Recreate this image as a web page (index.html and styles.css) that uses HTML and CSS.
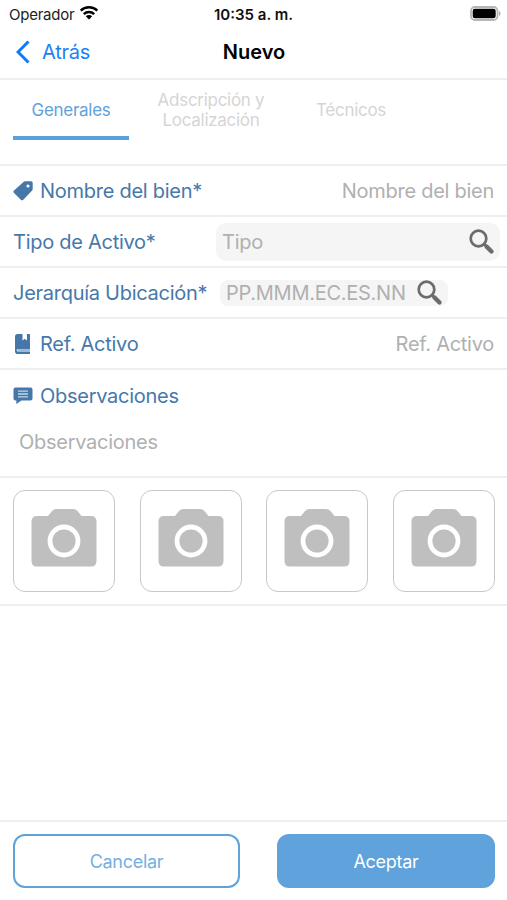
FILE: index.html
```html
<!DOCTYPE html>
<html lang="es">
<head>
    <meta charset="UTF-8">
    <title>Nuevo</title>
    <link rel="stylesheet" href="styles.css">
</head>
<body>

    <svg class="defs" width="0" height="0">
        <symbol id="search" viewBox="0 0 26 26">
            <circle cx="9.5" cy="9.5" r="7.800" fill="none" stroke="#6c6c6c" stroke-width="2.7"/>
            <path d="M15 15l2.5 2.5" stroke="#6c6c6c" stroke-width="2.5"/>
            <path d="M17.5 17.5l5 5" stroke="#6c6c6c" stroke-width="4.4" stroke-linecap="round"/>
        </symbol>
        <symbol id="camera" viewBox="0 0 66 60">
            <path d="M6 8h11l4-5q2-2 4-2h17q3 0 4.500 2l4 5H60q5.500 0 5.500 5.500V53q0 5.500-5.500 5.500H6Q.5 58.500.5 53V13.500Q.5 8 6 8z" fill="#bfbfbf"/>
            <circle cx="33" cy="33" r="14" fill="none" stroke="#fff" stroke-width="4.800"/>
        </symbol>
    </svg>

    <div class="status">
        <div class="carrier">
            <span class="operator">Operador</span>
            <svg width="20" height="15" viewBox="0 0 20 15">
                <g fill="none" stroke="#000" stroke-width="2.400">
                    <path d="M1.700 5.700a11.800 11.800 0 0 1 16.600 0"/>
                    <path d="M4.800 9.100a7.400 7.400 0 0 1 10.400 0"/>
                </g>
                <path d="M6.800 11.200a4.600 4.600 0 0 1 6.400 0L10 14.500z"/>
            </svg>
        </div>
        <span class="time">10:35 a. m.</span>
        <svg class="battery" width="31" height="15" viewBox="0 0 31 15">
            <rect x="1" y="1" width="26.500" height="13" rx="4" fill="#fff" stroke="#b5b5b5" stroke-width="1.800"/>
            <rect x="2.700" y="2.800" width="23" height="9.400" rx="2.200"/>
            <path d="M29 5v5q1.500-.8 1.500-2.500T29 5z" fill="#aaa"/>
        </svg>
    </div>

    <div class="navbar">
        <div class="back">
            <svg width="14" height="24" viewBox="0 0 14 24"><path d="M12.500 1.500L2 12l10.500 10.500" fill="none" stroke="#0a7aff" stroke-width="3"/></svg>
            <span class="back-text">Atrás</span>
        </div>
        <span class="title">Nuevo</span>
    </div>

    <div class="tabs">
        <div class="tab active"><span>Generales</span></div>
        <div class="tab"><span>Adscripción y<br>Localización</span></div>
        <div class="tab"><span>Técnicos</span></div>
    </div>

    <div class="form">
        <div class="row">
            <svg class="icon" width="20" height="20" viewBox="0 0 20 20">
                <path d="M10.200 1.200Q11 .3 12 .3h6q1.700 0 1.700 1.700v6q0 1-.8 1.800l-8.600 8.900q-1.300 1.200-2.500 0L1 11.900q-1.200-1.200 0-2.400z" fill="#4577a9"/>
                <circle cx="15" cy="5" r="1.600" fill="#fff"/>
            </svg>
            <span class="label">Nombre del bien*</span>
            <span class="hint">Nombre del bien</span>
        </div>
        <div class="row row-tipo">
            <span class="label">Tipo de Activo*</span>
            <div class="box box-tipo">
                <span class="hint">Tipo</span>
                <svg width="26" height="26"><use href="#search"/></svg>
            </div>
        </div>
        <div class="row">
            <span class="label">Jerarquía Ubicación*</span>
            <div class="box box-jerarquia">
                <span class="hint">PP.MMM.EC.ES.NN</span>
                <svg width="26" height="26"><use href="#search"/></svg>
            </div>
        </div>
        <div class="row">
            <svg class="icon" width="20" height="20" viewBox="0 0 20 20">
                <path d="M4.500 0h5v6.500l2.200-1.700L14 6.500V0h2.500q.5 0 .5.500V15H5q-1.300 0-1.300 1.200T5 17.600h12V20H4.700Q2 20 2 17.200V2.500Q2 0 4.500 0z" fill="#4577a9"/>
                <path d="M4.500 16.200H17" stroke="#9bb7d2" stroke-width="2.200"/>
            </svg>
            <span class="label">Ref. Activo</span>
            <span class="hint">Ref. Activo</span>
        </div>
        <div class="row row-obs">
            <div class="obs-head">
                <svg class="icon" width="20" height="20" viewBox="0 0 20 20">
                    <path d="M2.500 1.500h15q2 0 2 2v9q0 2-2 2H8.500L3.300 18v-3.500h-.8q-2 0-2-2v-9q0-2 2-2z" fill="#4577a9"/>
                    <path d="M5 5.200h10M5 8h10M5 10.800h10" stroke="#c5d6e6" stroke-width="1.300"/>
                </svg>
                <span class="label">Observaciones</span>
            </div>
            <span class="hint obs-hint">Observaciones</span>
        </div>
    </div>

    <div class="photos">
        <div class="photo"><svg width="66" height="60"><use href="#camera"/></svg></div>
        <div class="photo"><svg width="66" height="60"><use href="#camera"/></svg></div>
        <div class="photo"><svg width="66" height="60"><use href="#camera"/></svg></div>
        <div class="photo"><svg width="66" height="60"><use href="#camera"/></svg></div>
    </div>

    <div class="footer">
        <div class="btn cancel">Cancelar</div>
        <div class="btn accept">Aceptar</div>
    </div>

</body>
</html>
```
FILE: styles.css
```css
*{
    box-sizing: border-box;
}
body{
    margin: 0;
    height: 900px;
    display: flex;
    flex-direction: column;
    overflow: hidden;
    background: #fff;
    font-family: Inter, "Liberation Sans", sans-serif;
    font-size: 20px;
    white-space: nowrap;
}
svg{
    display: block;
    flex: none;
}
.defs{
    display: none;
}
.status{
    height: 28px;
    padding: 0 6px 0 9px;
    display: grid;
    grid-template-columns: 1fr auto 1fr;
    align-items: center;
    font-size: 15px;
    color: #222;
}
.carrier{
    display: flex;
    align-items: center;
    gap: 5px;
}
.operator{
    letter-spacing: -.25px;
}
.carrier svg{
    margin-top: -3px;
}
.time{
    margin-right: 3px;
    font-weight: 600;
    color: #111;
}
.battery{
    justify-self: end;
    margin-top: -2px;
}
.navbar{
    height: 52px;
    padding: 0 16px 2px;
    border-bottom: 2px solid #efefef;
    display: grid;
    grid-template-columns: 1fr auto 1fr;
    align-items: center;
}
.back{
    display: flex;
    align-items: center;
    gap: 12px;
    color: #1b82f5;
}
.back-text{
    letter-spacing: -.25px;
}
.title{
    margin-left: 1px;
    font-weight: 600;
    color: #000;
}
.tabs{
    height: 86px;
    padding: 0 13px;
    border-bottom: 2px solid #efefef;
    display: flex;
    gap: 24px;
    font-size: 17px;
    line-height: 20px;
    letter-spacing: -.28px;
    text-align: center;
    color: #d5d5d5;
}
.tab{
    width: 116px;
    height: 60px;
    display: flex;
    align-items: center;
    justify-content: center;
}
.active{
    color: #61a1dc;
    border-bottom: 4px solid #5b9fdb;
    padding-top: 4px;
}
.row{
    height: 51px;
    padding: 1px 13px 0;
    border-bottom: 2px solid #efefef;
    display: flex;
    align-items: center;
}
.icon{
    margin-right: 7px;
}
.label, .hint{
    letter-spacing: -.27px;
}
.label{
    color: #4678aa;
}
.hint{
    color: #b0b0b0;
}
.row > .hint{
    margin-left: auto;
}
.box{
    display: flex;
    align-items: center;
    justify-content: space-between;
    background: #f5f5f5;
}
.row-tipo{
    padding-right: 7px;
}
.box-tipo{
    width: 284px;
    height: 38px;
    margin-left: auto;
    padding: 0 5px 0 6px;
    border-radius: 10px;
}
.box-jerarquia{
    width: 228px;
    height: 26px;
    margin-left: auto;
    margin-right: 46px;
    padding: 0 5px 0 6px;
    border-radius: 8px;
}
.row-obs{
    height: 108px;
    flex-direction: column;
    align-items: flex-start;
    padding-top: 14px;
}
.obs-head{
    height: 24px;
    display: flex;
    align-items: center;
}
.row > .obs-hint{
    margin: 22px 0 0 6px;
}
.photos{
    height: 128px;
    padding: 12px 12px 0 13px;
    border-bottom: 2px solid #efefef;
    display: flex;
    justify-content: space-between;
}
.photo{
    width: 102px;
    height: 102px;
    border: 1px solid #c8c8c8;
    border-radius: 12px;
    display: flex;
    align-items: center;
    justify-content: center;
    padding-bottom: 6px;
}
.footer{
    height: 80px;
    margin-top: auto;
    padding: 12px 12px 0 13px;
    border-top: 2px solid #efefef;
    display: flex;
    justify-content: space-between;
    font-size: 18px;
    letter-spacing: -.28px;
}
.btn{
    height: 54px;
    border: 2px solid #5fa2dc;
    border-radius: 12px;
    display: flex;
    align-items: center;
    justify-content: center;
}
.cancel{
    width: 227px;
    color: #74afe2;
}
.accept{
    width: 218px;
    background: #5fa2dc;
    color: #fff;
}
```
